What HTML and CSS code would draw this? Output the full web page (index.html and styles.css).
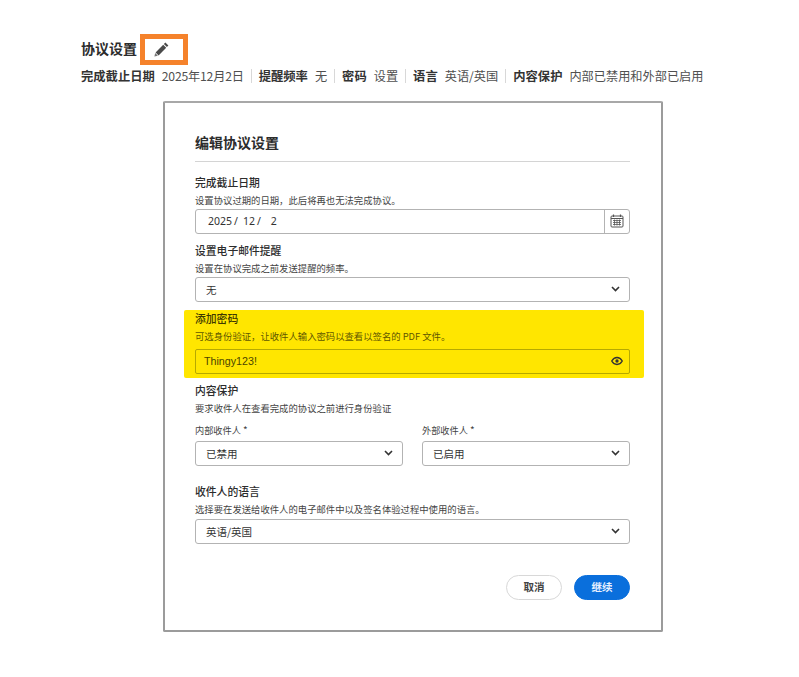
FILE: index.html
```html
<!DOCTYPE html>
<html lang="zh-CN">
<head>
<meta charset="utf-8">
<title>协议设置</title>
<link rel="stylesheet" href="styles.css">
</head>
<body>
<div class="page">
  <div class="head">
    <h1 class="head-title">协议设置</h1>
    <span class="edit-box">
      <svg class="pencil" width="15" height="15" viewBox="0 0 15 15"><path d="M11.400 .6 14.400 3.600 12.900 5.100 9.900 2.100z" fill="#4a4a4a"/><path d="M9.200 2.800 12.200 5.800 4.600 13.400 1.600 10.400z" fill="#4a4a4a"/><path d="M1.200 11.100 3.900 13.800 .4 14.600z" fill="#777"/></svg>
    </span>
  </div>
  <div class="summary">
    <b class="sum-key">完成截止日期</b><span class="sum-val sum-date">2025年12月2日</span><i class="sep"></i>
    <b class="sum-key">提醒频率</b><span class="sum-val">无</span><i class="sep"></i>
    <b class="sum-key">密码</b><span class="sum-val">设置</span><i class="sep"></i>
    <b class="sum-key">语言</b><span class="sum-val">英语/英国</span><i class="sep"></i>
    <b class="sum-key">内容保护</b><span class="sum-val">内部已禁用和外部已启用</span>
  </div>

  <div class="modal">
    <h2 class="modal-title">编辑协议设置</h2>

    <div class="field f-date">
      <div class="label">完成截止日期</div>
      <div class="desc">设置协议过期的日期，此后将再也无法完成协议。</div>
      <div class="control date">
        <span class="date-val"><span>2025</span><span class="slash">/</span><span class="d2">12</span><span class="slash">/</span><span class="d3">2</span></span>
        <span class="cal">
          <svg width="14" height="14" viewBox="0 0 14 14" fill="none" stroke="#555" stroke-width="1"><rect x="1" y="2" width="12" height="11" rx="1"/><path d="M3.500 .5v2.500M10.500 .5v2.500" stroke-width="1.200"/><path d="M1 4.500h12"/><path d="M3 6.500h8M3 8.500h8M3 10.500h8M4.500 5.500v6M7 5.500v6M9.500 5.500v6" stroke-width=".8"/></svg>
        </span>
      </div>
    </div>

    <div class="field f-remind">
      <div class="label">设置电子邮件提醒</div>
      <div class="desc">设置在协议完成之前发送提醒的频率。</div>
      <div class="control select"><span>无</span>
        <svg class="chev" width="9" height="6" viewBox="0 0 9 6"><path d="M1 1 4.500 4.500 8 1" fill="none" stroke="#333" stroke-width="1.600"/></svg>
      </div>
    </div>

    <div class="highlight">
      <div class="label">添加密码</div>
      <div class="desc">可选身份验证，让收件人输入密码以查看以签名的 PDF 文件。</div>
      <div class="control pass"><span class="pass-val">Thingy123!</span>
        <svg width="12" height="10" viewBox="0 0 13 10" fill="none" stroke="#333" stroke-width="1.500"><path d="M.8 5C2.300 2.400 4.200 1.200 6.500 1.200S10.700 2.400 12.200 5C10.700 7.600 8.800 8.800 6.500 8.800S2.300 7.600 .8 5z"/><circle cx="6.500" cy="5" r="1.800" fill="#333" stroke="none"/></svg>
      </div>
    </div>

    <div class="field f-protect">
      <div class="label">内容保护</div>
      <div class="desc">要求收件人在查看完成的协议之前进行身份验证</div>
      <div class="cols">
        <div class="col">
          <div class="sublabel">内部收件人 <span class="star">*</span></div>
          <div class="control select"><span>已禁用</span>
            <svg class="chev" width="9" height="6" viewBox="0 0 9 6"><path d="M1 1 4.500 4.500 8 1" fill="none" stroke="#333" stroke-width="1.600"/></svg>
          </div>
        </div>
        <div class="col">
          <div class="sublabel">外部收件人 <span class="star">*</span></div>
          <div class="control select"><span>已启用</span>
            <svg class="chev" width="9" height="6" viewBox="0 0 9 6"><path d="M1 1 4.500 4.500 8 1" fill="none" stroke="#333" stroke-width="1.600"/></svg>
          </div>
        </div>
      </div>
    </div>

    <div class="field f-lang">
      <div class="label">收件人的语言</div>
      <div class="desc">选择要在发送给收件人的电子邮件中以及签名体验过程中使用的语言。</div>
      <div class="control select"><span>英语/英国</span>
        <svg class="chev" width="9" height="6" viewBox="0 0 9 6"><path d="M1 1 4.500 4.500 8 1" fill="none" stroke="#333" stroke-width="1.600"/></svg>
      </div>
    </div>

    <div class="actions">
      <button class="btn cancel">取消</button>
      <button class="btn primary">继续</button>
    </div>
  </div>
</div>
</body>
</html>
```
FILE: styles.css
```css
* { box-sizing: border-box; }
html, body { margin: 0; padding: 0; background: #fff; }
body {
  font-family: "Noto Sans CJK SC", "Noto Sans", sans-serif;
  color: #2c2c2c;
}
.page { width: 799px; height: 677px; padding: 34px 0 0 81px; overflow: hidden; }

.head { display: flex; align-items: flex-start; height: 31px; }
.head-title { margin: 0; font-size: 14px; font-weight: 700; line-height: 28px; color: #2c2c2c; }
.edit-box {
  width: 48px; height: 31px; margin-left: 3px;
  border: 5px solid #f5822b;
  display: flex; align-items: center; justify-content: center;
  padding-right: 5px;
}
.pencil { display: block; }

.summary {
  display: flex; align-items: center;
  height: 20px; margin-top: 1px;
  white-space: nowrap;
}
.sum-key { font-weight: 700; font-size: 12.300px; color: #333; margin-right: 7px; }
.sum-val { font-size: 12.200px; color: #505050; }
.sum-date { letter-spacing: -.2px; }
.sep { width: 1px; height: 14px; background: #d8d8d8; margin: 0 7px; }

.modal {
  width: 500px; height: 531px;
  margin: 15px 0 0 82px;
  padding: 28px 31px 0 30px;
  background: #fff;
  border: 2px solid #9b9b9b;
  border-top-color: #a8a8a8;
  border-radius: 2px;
}
.modal-title {
  margin: 0; height: 30.500px;
  font-size: 14px; font-weight: 700; line-height: 20px; color: #2c2c2c;
  border-bottom: 1.500px solid #d4d4d4;
  padding-top: 1px;
}
.label { font-size: 10.800px; font-weight: 500; line-height: 16px; color: #2c2c2c; }
.desc { font-size: 9.350px; line-height: 14px; color: #444; margin-top: 3px; white-space: nowrap; }

.control {
  height: 25px; margin-top: 2px;
  display: flex; align-items: center; justify-content: space-between;
  border: 1px solid #b3b3b3; border-radius: 3px;
  background: #fff;
  font-size: 10.500px; color: #333;
}
.select { padding: 0 9px 0 10px; }
.chev { display: block; }

.f-date { margin-top: 12px; }
.date { padding: 0; }
.date-val { display: flex; padding-left: 12px; font-family: "Noto Sans", sans-serif; font-size: 10.500px; }
.date-val .slash { margin-left: 2px; }
.date-val .d2 { margin-left: 5px; }
.date-val .d3 { margin-left: 10px; }
.cal {
  width: 25px; height: 100%;
  display: flex; align-items: center; justify-content: center;
  border-left: 1px solid #b3b3b3;
}
.f-remind { margin-top: 8px; }

.highlight {
  margin: 8px -14px 0 -11px;
  height: 68px;
  padding: 0 14px 0 11px;
  background: #ffe600;
  border-radius: 2px;
}
.highlight .desc { color: #5f5600; }
.highlight .label { color: #3d3800; }
.pass {
  margin-top: 6px; padding: 0 6px 0 8px;
  background: transparent; border-color: #b6a900; border-radius: 2px;
  font-family: "Liberation Sans", sans-serif; font-size: 10.700px; color: #4a4500;
}

.f-protect { margin-top: 4px; }
.cols { display: flex; gap: 19px; margin-top: 8px; }
.col { flex: 1 1 0; }
.sublabel { font-size: 9.200px; line-height: 14px; color: #444; }
.star { font-size: 10px; }
.col .control { margin-top: 4px; }

.f-lang { margin-top: 17px; }
.f-lang .control { margin-top: 3px; }

.actions { display: flex; justify-content: flex-end; gap: 12px; margin-top: 31px; }
.btn {
  height: 25px; width: 56px;
  border-radius: 13px;
  font-family: inherit; font-size: 10.500px; font-weight: 700;
  padding: 0; line-height: 1;
}
.cancel { background: #fff; border: 1.500px solid #d8d8d8; color: #444; }
.primary { background: #0a6fdc; border: 1px solid #0a6fdc; color: #e6f0ff; }
```
